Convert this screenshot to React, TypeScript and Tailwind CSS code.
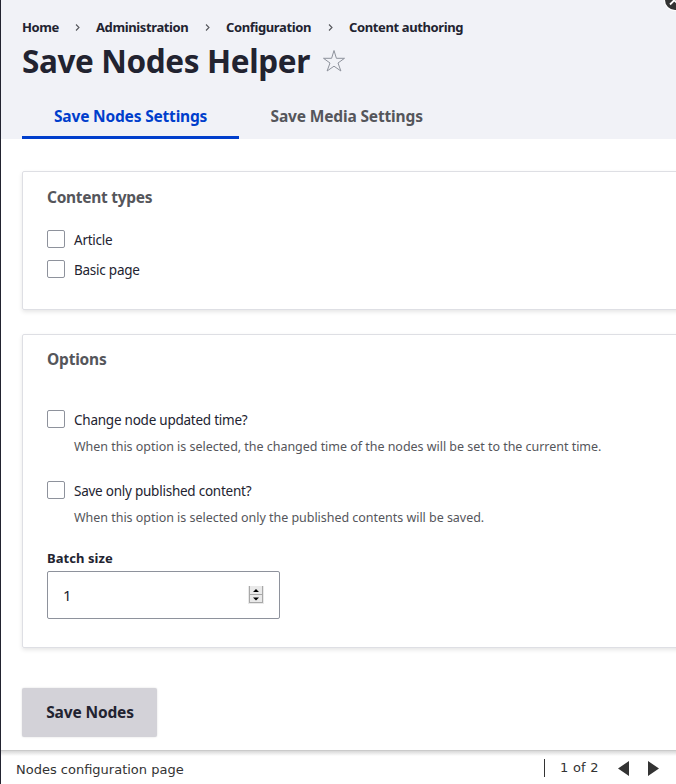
import { Fragment } from "react";

const crumbs = [
  { label: "Home", style: "w-[37px]" },
  { label: "Administration", style: "w-[93px]" },
  { label: "Configuration", style: "w-[86px]" },
  { label: "Content authoring", style: "w-[114px]" },
];

function Checkbox({ label, description }: { label: string; description?: string }) {
  return (
    <div>
      <label className="flex h-[18px] items-center gap-[9px] text-[13.5px] tracking-[-0.24px]">
        <span className="size-[18px] shrink-0 rounded-[2px] border border-[#8e929c] bg-white" />
        <span className="relative top-px whitespace-nowrap">{label}</span>
      </label>
      {description && (
        <p className="mt-[10px] ml-[27px] h-[17px] text-[12.5px] leading-[18px] tracking-[-0.03px] whitespace-nowrap text-[#55565b]">
          {description}
        </p>
      )}
    </div>
  );
}

export default function App() {
  return (
    <div className="relative flex h-[784px] w-[676px] flex-col overflow-hidden border-l border-[#222330] bg-white font-['Noto_Sans',sans-serif] text-[#222330]">
      <header className="h-[139px] shrink-0 bg-[#f1f2f7] pl-[21px]">
        <nav className="flex h-[36px] items-end text-[13px] leading-[18px] font-bold tracking-[-0.38px]">
          {crumbs.map((c, i) => (
            <Fragment key={c.label}>
              {i > 0 && (
                <span className="flex h-[18px] w-[37px] items-center justify-center pt-px">
                  <svg width="5" height="7" viewBox="0 0 5 7" fill="none" stroke="#55565b" strokeWidth="1.1">
                    <path d="M1 .5 4 3.5 1 6.5" />
                  </svg>
                </span>
              )}
              <a className={`${c.style} whitespace-nowrap`}>{c.label}</a>
            </Fragment>
          ))}
        </nav>
        <div className="flex h-[50px] items-center">
          <h1 className="w-[300px] text-[31.5px] leading-[50px] font-bold tracking-[-0.38px] whitespace-nowrap">
            Save Nodes Helper
          </h1>
          <svg width="24" height="24" viewBox="0 0 24 24" fill="none" stroke="#8e929c" strokeWidth="1">
            <path d="M12 1.5 14.4 9.3H22.5L16 14 18.9 22 12 17.2 5.1 22 8 14 1.5 9.3H9.6Z" />
          </svg>
        </div>
        <div className="mt-[6px] flex h-[47px] text-[15.5px] leading-[49px] font-bold">
          <a className="w-[217px] border-b-3 border-[#003ecc] pl-8 tracking-[-0.18px] whitespace-nowrap text-[#003ecc]">
            Save Nodes Settings
          </a>
          <a className="pl-[31.5px] tracking-[-0.15px] whitespace-nowrap text-[#55565b]">Save Media Settings</a>
        </div>
      </header>

      <main className="min-h-0 grow pt-8 pl-[21px]">
        <fieldset className="h-[139px] w-[680px] rounded-[2px] border border-[#dedfe4] pt-[13px] pl-6 shadow-[0_2px_4px_rgba(0,0,0,0.1)]">
          <h2 className="text-[15.5px] leading-6 font-bold tracking-[-0.28px] text-[#55565b]">Content types</h2>
          <div className="mt-[21px] flex flex-col gap-3">
            <Checkbox label="Article" />
            <Checkbox label="Basic page" />
          </div>
        </fieldset>

        <fieldset className="mt-6 h-[314px] w-[680px] rounded-[2px] border border-[#dedfe4] pt-[12px] pl-6 shadow-[0_2px_4px_rgba(0,0,0,0.1)]">
          <h2 className="text-[15.5px] leading-6 font-bold tracking-[-0.2px] text-[#55565b]">Options</h2>
          <div className="mt-[39px] flex flex-col gap-[26px]">
            <Checkbox
              label="Change node updated time?"
              description="When this option is selected, the changed time of the nodes will be set to the current time."
            />
            <Checkbox
              label="Save only published content?"
              description="When this option is selected only the published contents will be saved."
            />
          </div>
          <div className="mt-[23px] text-[13px] leading-[18px] font-bold tracking-[0.06px]">Batch size</div>
          <div className="mt-[4px] flex h-12 w-[233px] items-center justify-between rounded-[2px] border border-[#8e929c] pr-[15px] pl-[15px] text-[15px]">
            <span>1</span>
            <svg width="16" height="18" viewBox="0 0 16 18">
              <path fill="#e9e9e9" d="M0 0h16v18H0z" />
              <path fill="none" stroke="#a8a8a8" d="M1.5 0v17M14.5 0v17M1 8.5h14M1 16.5h14" />
              <path d="M5 6h6L8 3zM5 11.500h6L8 14.500z" />
            </svg>
          </div>
        </fieldset>

        <button className="mt-10 block h-[49px] w-[135px] rounded-[2px] bg-[#d3d2d8] pt-px pl-px text-[15.5px] font-bold tracking-[-0.14px] whitespace-nowrap shadow-[0_0_2px_rgba(0,0,0,0.15)]">
          Save Nodes
        </button>
      </main>

      <footer className="flex h-[34px] shrink-0 items-center border-t border-[#cacaca] bg-[linear-gradient(#d8d8d8,#ffffff_5px)] pl-[15px] font-['DejaVu_Sans',sans-serif] text-[13px] text-[#333333]">
        <span className="w-[528px] pt-[4px] whitespace-nowrap">Nodes configuration page</span>
        <span className="h-[18px] w-px bg-[#333333]" />
        <span className="ml-[15px] w-[42px] tracking-[0.25px] whitespace-nowrap">1 of 2</span>
        <svg className="mt-[2px] ml-[16px]" width="42" height="16" viewBox="0 0 42 16" fill="#333333">
          <path d="M11 0v15L0 7.500zM30 0v15l11-7.500z" />
        </svg>
      </footer>

      <svg className="absolute top-0 right-0" width="12" height="12" viewBox="0 0 12 12">
        <circle cx="11" cy="0" r="11" fill="#fff" />
        <circle cx="11" cy="0" r="10" fill="#333333" />
        <path d="M6 4.500 12-1.500M9-1l4 4" stroke="#fff" strokeWidth="1.800" />
      </svg>
    </div>
  );
}
